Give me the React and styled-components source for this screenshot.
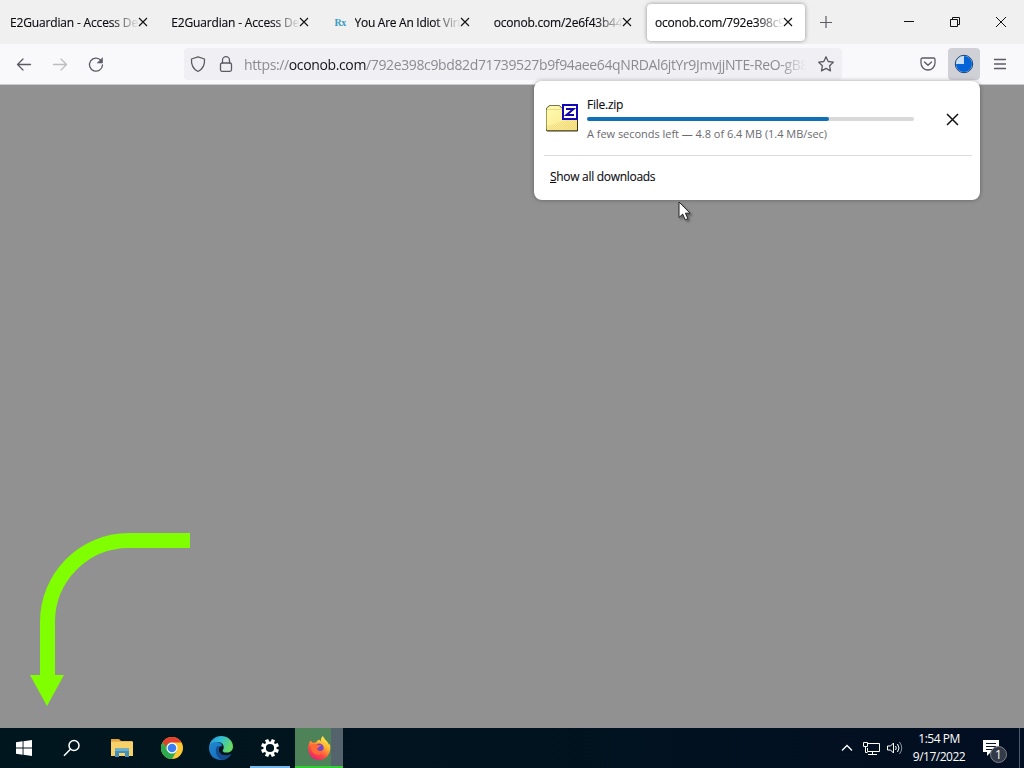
import styled, { createGlobalStyle } from "styled-components";

const GlobalStyle = createGlobalStyle`
  * {
    box-sizing: border-box;
  }

  body {
    margin: 0;
    overflow: hidden;
    font-family: "Open Sans", "Noto Sans", sans-serif;
  }

  svg {
    display: block;
    flex: none;
  }
`;

const Desktop = styled.div`
  position: relative;
  display: flex;
  flex-direction: column;
  width: 1024px;
  height: 768px;
  overflow: hidden;
  background: #919191;
`;

const TabBar = styled.div`
  display: flex;
  align-items: center;
  height: 44px;
  padding-left: 2px;
  background: #f0f0f0;
`;

const StyledTab = styled.div`
  display: flex;
  align-items: center;
  width: 158px;
  height: 37px;
  margin-right: 3.25px;
  padding: 0 13.25px 0 8px;
  border-radius: 4px;
  background: ${({ $active }) => ($active ? "#fff" : "transparent")};
  box-shadow: ${({ $active }) =>
    $active ? "0 0 4px rgba(0, 0, 0, 0.4)" : "none"};
`;

const TabTitle = styled.span`
  flex: 1;
  overflow: hidden;
  padding-top: 1px;
  font-size: 12px;
  line-height: 18px;
  letter-spacing: ${({ $spacing }) => $spacing || 0}px;
  white-space: nowrap;
  color: #0c0b10;
  -webkit-text-stroke: 0.15px #0c0b10;
  mask-image: linear-gradient(to left, transparent, #000 28px);
`;

const Favicon = styled.span`
  width: 22px;
  padding-left: 2px;
  font: bold 10px "Liberation Serif", serif;
  letter-spacing: -0.5px;
  color: #3a9cc0;
`;

const NewTab = styled.div`
  display: flex;
  justify-content: center;
  width: 35px;
`;

const WindowControls = styled.div`
  display: flex;
  margin-left: auto;
`;

const WindowButton = styled.div`
  display: flex;
  align-items: center;
  justify-content: center;
  width: 46px;
  height: 44px;
`;

const NavBar = styled.div`
  display: flex;
  align-items: center;
  height: 41px;
  padding: 0 5px 0 6px;
  background: #f9f9fb;
  border-bottom: 1px solid #ccccd0;
`;

const NavButton = styled.div`
  display: flex;
  align-items: center;
  justify-content: center;
  width: ${({ $width }) => $width || 36}px;
  height: 32px;
  border-radius: 4px;
  background: ${({ $pressed }) => ($pressed ? "#d0d0d7" : "transparent")};
`;

const StarButton = styled(NavButton)`
  width: 32px;
  margin-left: 4px;
`;

const UrlBar = styled.div`
  display: flex;
  align-items: center;
  width: 658px;
  height: 32px;
  margin-left: 70px;
  border-radius: 4px;
  background: #f0f0f4;
`;

const UrlText = styled.span`
  width: 562px;
  margin-left: 4px;
  padding-top: 1px;
  overflow: hidden;
  font-size: 14px;
  line-height: 22px;
  letter-spacing: -0.37px;
  white-space: nowrap;
  color: #8b8b92;
  mask-image: linear-gradient(to left, transparent, #000 26px);

  b {
    font-weight: 400;
    color: #15141a;
  }
`;

const NavTools = styled.div`
  display: flex;
  margin-left: auto;
`;

const Page = styled.main`
  flex: 1;
  display: flex;
  align-items: flex-end;
  padding: 0 0 22px 30px;
`;

const DownloadPanel = styled.section`
  position: absolute;
  top: 81px;
  left: 534px;
  display: flex;
  flex-direction: column;
  width: 446px;
  height: 119px;
  padding: 0 8px 0 10px;
  border-radius: 8px;
  background: #fff;
  box-shadow: 0 0 4px rgba(0, 0, 0, 0.35);
  color: #0c0b10;
`;

const DownloadItem = styled.div`
  display: flex;
  height: 75px;
  border-bottom: 1px solid #dcdcde;

  > svg {
    margin-top: 20px;
  }
`;

const DownloadDetails = styled.div`
  width: 327px;
  margin: 15px 32.5px 0 9px;
`;

const FileName = styled.div`
  font-size: 12px;
  line-height: 17px;
  letter-spacing: -0.25px;
  -webkit-text-stroke: 0.1px;
`;

const ProgressTrack = styled.div`
  height: 4px;
  margin: 4px 0 5px;
  border-radius: 2px;
  background: #d9d9dc;
`;

const ProgressFill = styled.div`
  height: 4px;
  border-radius: 2px;
  background: #1070b5;
`;

const Status = styled.div`
  font-size: 11px;
  line-height: 16px;
  letter-spacing: -0.03px;
  white-space: nowrap;
  color: #6a6a70;
`;

const PanelClose = styled.div`
  display: flex;
  align-items: center;
  height: 77px;
`;

const ShowAll = styled.div`
  padding: 12px 0 0 6px;
  font-size: 12px;
  line-height: 17px;
  letter-spacing: -0.3px;
  -webkit-text-stroke: 0.1px;
`;

const Cursor = styled.svg`
  position: absolute;
  top: 201px;
  left: 678px;
  filter: drop-shadow(2px 2px 1px rgba(0, 0, 0, 0.35));
`;

const Taskbar = styled.footer`
  display: flex;
  height: 40px;
  background: linear-gradient(to right, #00161e, #01131f 50%, #020e22);
  color: #fff;
`;

const TaskButton = styled.div`
  display: flex;
  align-items: center;
  justify-content: center;
  width: ${({ $width }) => $width || 49}px;
  height: 40px;
`;

const SettingsButton = styled(TaskButton)`
  width: 40px;
  margin: 0 5px;
  border-bottom: 2px solid #76b9ed;
  padding-top: 2px;
`;

const FirefoxButton = styled(TaskButton)`
  width: 48px;
  padding-top: 2px;
  border-bottom: 2px solid #32cd32;
  background: linear-gradient(to right, #4e8259 36px, #54636c 36px);
`;

const Tray = styled.div`
  display: flex;
  align-items: center;
  margin-left: auto;
`;

const Clock = styled.div`
  width: 66px;
  margin: 0 11px 0 -1px;
  font-size: 12px;
  line-height: 18px;
  letter-spacing: -0.5px;
  text-align: center;
`;

const Notifications = styled.div`
  position: relative;
  width: 28px;
  height: 40px;
  padding-top: 12px;
`;

const Badge = styled.span`
  position: absolute;
  top: 18px;
  left: 7px;
  width: 17px;
  height: 17px;
  border: 1px solid #7d828b;
  border-radius: 50%;
  background: #343b48;
  font-size: 12px;
  line-height: 15px;
  text-align: center;
`;

const PeekEdge = styled.div`
  width: 5px;
  height: 40px;
  margin-left: 8px;
  border-left: 1px solid #515a68;
`;

const tabs = [
  { title: "E2Guardian - Access Denied", spacing: -0.16 },
  { title: "E2Guardian - Access Denied", spacing: -0.16 },
  { title: "You Are An Idiot Virus", spacing: -0.27, icon: "Rx" },
  { title: "oconob.com/2e6f43b44a", spacing: -0.22 },
  { title: "oconob.com/792e398c9b", spacing: -0.22, active: true },
];

// eslint-disable-next-line react/prop-types
const Cross = ({ size = 8, color = "#111", width = 1.4 }) => (
  <svg width={size} height={size} viewBox="0 0 10 10" overflow="visible">
    <path d="M0 0 10 10M10 0 0 10" stroke={color} strokeWidth={width} />
  </svg>
);

const Plus = () => (
  <svg width="12" height="12" stroke="#5b5b66" strokeWidth="1.2">
    <path d="M6 0v12M0 6.500h12" />
  </svg>
);

// eslint-disable-next-line react/prop-types
const NavIcon = ({ children, color = "#5b5b66" }) => (
  <svg
    width="16"
    height="16"
    viewBox="0 0 16 16"
    fill="none"
    stroke={color}
    strokeWidth="1.3"
    strokeLinecap="round"
    strokeLinejoin="round"
    overflow="visible"
  >
    {children}
  </svg>
);

const ZipIcon = () => (
  <svg width="34" height="32" viewBox="0 0 34 32">
    <defs>
      <pattern id="grain" width="2" height="2" patternUnits="userSpaceOnUse">
        <path d="M0 0h1v1H0zM1 1h1v1H1z" fill="#e5c35c" />
      </pattern>
      <linearGradient id="folder" x2="1" y2="1">
        <stop offset="0" stopColor="#fffcb0" />
        <stop offset="1" stopColor="#f8e48a" />
      </linearGradient>
    </defs>
    <path
      d="M2.5 7.5 6 4.500h9l3 3h15.500v22h-31z"
      fill="url(#folder)"
      stroke="#a59b4c"
    />
    <path d="M3 25 33 16v13H3z" fill="url(#grain)" opacity=".45" />
    <path d="M3 8.500h14" stroke="#e6dc88" />
    <path d="M2.500 9V7L5.500 4.500h10l3 3" fill="none" stroke="#77764c" />
    <path d="M2.500 28.500q0 1.500 1 1.500h30V17" fill="none" stroke="#3a3516" />
    <path d="M19 4h14v14H19z" fill="#fff" stroke="#1208b8" strokeWidth="2" />
    <path
      d="M22 8h7.500L22.500 14H30"
      fill="none"
      stroke="#1208a8"
      strokeWidth="2"
    />
  </svg>
);

const Arrow = () => (
  <svg width="161" height="174" viewBox="0 0 161 174">
    <path
      d="M160 8.500H99C53 8.500 17.500 46 17.500 90v56"
      fill="none"
      stroke="#80ff00"
      strokeWidth="15"
    />
    <path d="M0 143h34L17 174z" fill="#80ff00" />
  </svg>
);

const WindowsIcon = () => (
  <svg width="16" height="16" viewBox="0 0 16 16" fill="#fff">
    <path d="M0 2.300 6.600 1.300V7.500H0zM7.500 1.200 16 0v7.500H7.500zM0 8.500h6.600v6.200L0 13.700zM7.500 8.500H16V16l-8.500-1.200z" />
  </svg>
);

const SearchIcon = () => (
  <svg width="18" height="18" viewBox="0 0 18 18" fill="none" stroke="#fff">
    <circle cx="11" cy="6.500" r="5" strokeWidth="1.500" />
    <path d="M7.400 10.200 1 16.700" strokeWidth="1.500" />
  </svg>
);

const ExplorerIcon = () => (
  <svg width="22" height="20" viewBox="0 0 22 20">
    <path d="M0 1h8l2 2h11v4H0z" fill="#e5a13a" />
    <path d="M0 3.500h22V18H0z" fill="#f8d168" />
    <path d="M4 19v-8.500h14V19h-4v-4H8v4z" fill="#438fb9" />
    <path d="M4 10.500h14V13H4z" fill="#65afd1" />
  </svg>
);

const ChromeIcon = () => (
  <svg width="22" height="22" viewBox="0 0 22 22">
    <circle cx="11" cy="11" r="11" fill="#fcc934" />
    <path d="M1.470 5.500A11 11 0 0 0 11 22l4.760-8.250L11 11 6.200 13.700z" fill="#2da94f" />
    <path d="M1.470 5.500 6.240 13.750 11 11V5.500z" fill="#2da94f" />
    <path d="M1.470 5.500A11 11 0 0 1 20.530 5.500H11A5.500 5.500 0 0 0 5 9.500z" fill="#e5402f" />
    <circle cx="11" cy="11" r="5.500" fill="#fff" />
    <circle cx="11" cy="11" r="4.300" fill="#3c7ff0" />
  </svg>
);

const EdgeIcon = () => (
  <svg width="24" height="24" viewBox="0 0 24 24">
    <defs>
      <linearGradient id="edgeTop" x2="1" y2=".4">
        <stop offset="0" stopColor="#258dd6" />
        <stop offset=".5" stopColor="#32bfd5" />
        <stop offset="1" stopColor="#66da62" />
      </linearGradient>
      <linearGradient id="edgeLow" x2="1" y2="1">
        <stop offset="0" stopColor="#2187d2" />
        <stop offset="1" stopColor="#1368b5" />
      </linearGradient>
    </defs>
    <path
      d="M0 11C1 4 6 0 12 0c7 0 12 5 12 10.500 0 4-3 6-6 6-3.500 0-5-1.200-4-2.600C16 11 14 6 8.500 6 4 6 1 8.500 0 11z"
      fill="url(#edgeTop)"
    />
    <path
      d="M0 12C0 8 4 5.500 8 6c3 .3 5 2 5 4-3 0-4 3-3 5.500 1.500 4 7 5.500 12 2.500C20 22 16 24 12 24 5 24 0 19 0 12z"
      fill="url(#edgeLow)"
    />
    <path
      d="M8 10.500C5 15 8 22 13 23.900 17 23.500 20.500 21 22 18c-5 3-10.500 1.500-12-2.500C9 13 10 11 12 10z"
      fill="#174b8e"
    />
  </svg>
);

const GearIcon = () => (
  <svg width="18" height="18" viewBox="-9 -9 18 18" stroke="#fff" fill="none">
    <circle r="5.300" strokeWidth="2.400" />
    {[22.5, 67.5, 112.5, 157.5].map((angle) => (
      <path
        key={angle}
        d="M0-9v3.500M0 5.500V9"
        strokeWidth="3.500"
        transform={`rotate(${angle})`}
      />
    ))}
  </svg>
);

const FirefoxIcon = () => (
  <svg width="24" height="24" viewBox="0 0 24 24">
    <defs>
      <linearGradient id="fox" x1=".8" y1=".05" x2=".25" y2="1">
        <stop offset="0" stopColor="#fff14f" />
        <stop offset=".35" stopColor="#ffb02f" />
        <stop offset=".68" stopColor="#ff4b40" />
        <stop offset="1" stopColor="#e51c79" />
      </linearGradient>
    </defs>
    <path
      d="M3.500 4.500 6 7c1-.6 2-.6 3-.3C9.500 5 11 4 12.500 3.800L14 5.500C13.500 3 14.500 1 16 0c.5 3 5 5 6 9l.8-1c2 7-2 16-10.800 16C5 24 1 18 1.200 12c0-3 1-5.500 2.300-7.500z"
      fill="url(#fox)"
    />
    <circle cx="12.200" cy="12" r="4.500" fill="#7449c6" />
    <path
      d="M4 9c3-2 5.500-1 7.500.2 1.500-.4 2.500.2 3 .8-3 0-2.500 2-4.500 2.500.5 3 4.500 3 6.500 1-.5 4-4 6-7.500 5-3.500-1-5.500-4-5-9.500z"
      fill="#ff6a35"
    />
  </svg>
);

const DownloadProgressIcon = () => (
  <svg width="20" height="20" viewBox="0 0 20 20">
    <circle cx="10" cy="10" r="8.700" fill="#c7def5" stroke="#17426f" />
    <path d="M10 10V2a8 8 0 1 1-8 8z" fill="#0563d8" />
  </svg>
);

const App = () => {
  const progress = 74;

  return (
    <Desktop>
      <GlobalStyle />
      <TabBar>
        {tabs.map(({ title, spacing, icon, active }, index) => (
          <StyledTab key={index} $active={active}>
            {icon && <Favicon>{icon}</Favicon>}
            <TabTitle $spacing={spacing}>{title}</TabTitle>
            <Cross />
          </StyledTab>
        ))}
        <NewTab>
          <Plus />
        </NewTab>
        <WindowControls>
          <WindowButton>
            <svg width="10" height="10">
              <path d="M0 4.500h10" stroke="#111" />
            </svg>
          </WindowButton>
          <WindowButton>
            <svg width="10" height="10" fill="none" stroke="#111">
              <path d="M.5 2.500h7v7h-7zM2.500 2V.5h7v7H8" />
            </svg>
          </WindowButton>
          <WindowButton>
            <Cross size={10} width={1} />
          </WindowButton>
        </WindowControls>
      </TabBar>

      <NavBar>
        <NavButton>
          <NavIcon>
            <path d="M14.500 8.500H1.500M7 3 1.500 8.500 7 14" />
          </NavIcon>
        </NavButton>
        <NavButton>
          <NavIcon color="#bcbcc1">
            <path d="M1.500 8.500h13M9 3l5.500 5.500L9 14" />
          </NavIcon>
        </NavButton>
        <NavButton>
          <NavIcon>
            <path d="M14.500 9A6.500 6.500 0 1 1 13 4.500" />
            <path d="M14.500 2v5h-5z" fill="#5b5b66" strokeWidth=".6" />
          </NavIcon>
        </NavButton>
        <UrlBar>
          <NavButton $width={28}>
            <NavIcon>
              <path d="M8 .8 14.500 3c.5 6-1.500 10-6.500 12.500C3 13 1 9 1.500 3z" />
            </NavIcon>
          </NavButton>
          <NavButton $width={28}>
            <NavIcon>
              <rect x="2.500" y="7" width="11" height="8.300" rx="1.500" />
              <path d="M4.500 7V4.200a3.500 3.500 0 0 1 7 0V7" />
            </NavIcon>
          </NavButton>
          <UrlText>
            https://<b>oconob.com</b>
            /792e398c9bd82d71739527b9f94aee64qNRDAl6jtYr9JmvjjNTE-ReO-gB8x
          </UrlText>
          <StarButton>
            <NavIcon>
              <path d="m8 .8 2.200 4.700 5.100.7-3.700 3.500.9 5.200L8 12.400l-4.500 2.500.9-5.200L.7 6.200l5.100-.7z" />
            </NavIcon>
          </StarButton>
        </UrlBar>
        <NavTools>
          <NavButton $width={40}>
            <NavIcon>
              <path d="M2.500 2h11q1.500 0 1.500 1.500V7A7 7 0 0 1 1 7V3.500Q1 2 2.500 2zM4.500 6 8 9.300 11.500 6" />
            </NavIcon>
          </NavButton>
          <NavButton $width={32} $pressed>
            <DownloadProgressIcon />
          </NavButton>
          <NavButton $width={39}>
            <NavIcon>
              <path d="M2.500 3.500h11M2.500 8h11M2.500 12.500h11" />
            </NavIcon>
          </NavButton>
        </NavTools>
      </NavBar>

      <Page>
        <Arrow />
      </Page>

      <DownloadPanel>
        <DownloadItem>
          <ZipIcon />
          <DownloadDetails>
            <FileName>File.zip</FileName>
            <ProgressTrack>
              <ProgressFill style={{ width: `${progress}%` }} />
            </ProgressTrack>
            <Status>A few seconds left — 4.8 of 6.4 MB (1.4 MB/sec)</Status>
          </DownloadDetails>
          <PanelClose>
            <Cross size={11} width={1.3} />
          </PanelClose>
        </DownloadItem>
        <ShowAll>
          <u>S</u>how all downloads
        </ShowAll>
      </DownloadPanel>

      <Cursor width="13" height="20" viewBox="0 0 13 20">
        <path
          d="M1 1v15.500l3.700-3.400 2.500 5.700 2.700-1.200-2.500-5.400H12z"
          fill="#fff"
          stroke="#222"
        />
      </Cursor>

      <Taskbar>
        <TaskButton $width={48}>
          <WindowsIcon />
        </TaskButton>
        <TaskButton $width={48}>
          <SearchIcon />
        </TaskButton>
        <TaskButton $width={52}>
          <ExplorerIcon />
        </TaskButton>
        <TaskButton $width={48}>
          <ChromeIcon />
        </TaskButton>
        <TaskButton>
          <EdgeIcon />
        </TaskButton>
        <SettingsButton>
          <GearIcon />
        </SettingsButton>
        <FirefoxButton>
          <FirefoxIcon />
        </FirefoxButton>
        <Tray>
          <TaskButton $width={24}>
            <svg width="12" height="8" fill="none" stroke="#fff">
              <path d="m1 6.500 5-5 5 5" strokeWidth="1.300" />
            </svg>
          </TaskButton>
          <TaskButton $width={24}>
            <svg width="17" height="15" fill="none" stroke="#fff">
              <path d="M5 2.500h11.500v8H4.500V7M9.500 10.500v3M5 13.500h9M.5 1.500h4v4h-4zM2.500 5.500v6h2" />
            </svg>
          </TaskButton>
          <TaskButton $width={24}>
            <svg width="16" height="14" fill="none" stroke="#fff">
              <path d="M.5 5h3l3-3v10l-3-3h-3z" />
              <path d="M8.500 5q1.500 2 0 4M10.500 3q3 4 0 8" />
              <path d="M12.500 1q4.500 6 0 12" stroke="#8b929c" />
            </svg>
          </TaskButton>
          <Clock>
            <div>1:54 PM</div>
            <div>9/17/2022</div>
          </Clock>
          <Notifications>
            <svg width="16" height="16">
              <path d="M0 0h16v12H8l-4 4v-4H0z" fill="#fff" />
              <path d="M3 3.500h10M3 6.500h10M3 9.500h6" stroke="#06152a" />
            </svg>
            <Badge>1</Badge>
          </Notifications>
          <PeekEdge />
        </Tray>
      </Taskbar>
    </Desktop>
  );
};

export default App;
